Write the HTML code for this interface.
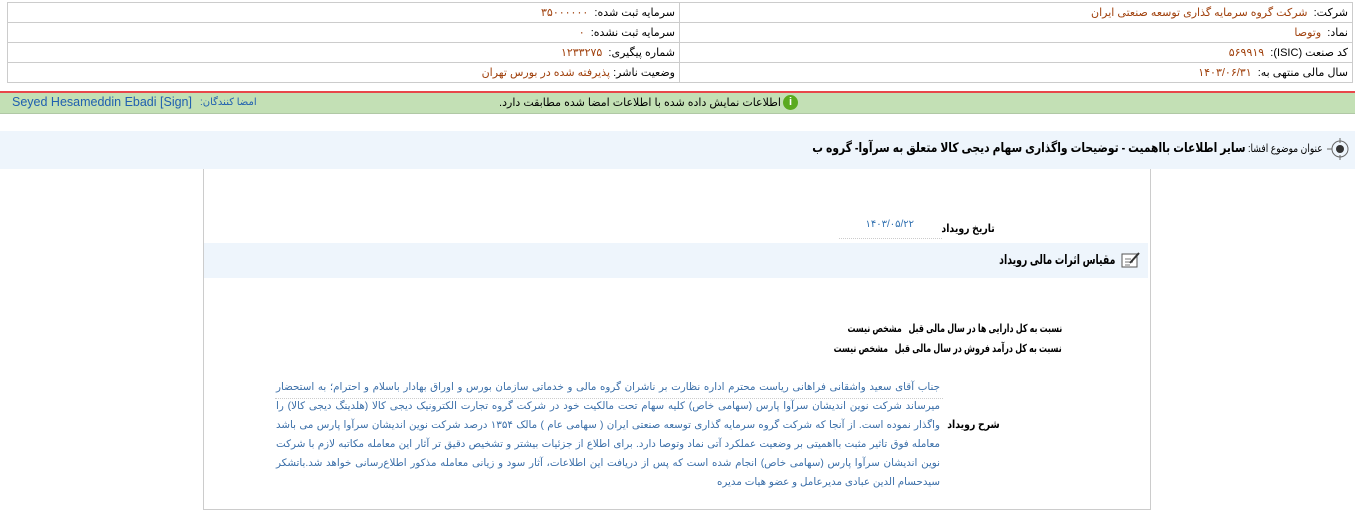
<!DOCTYPE html>
<html><head><meta charset="utf-8"><style>
body{margin:0;width:1355px;height:529px;background:#fff;position:relative;overflow:hidden;font-family:"Liberation Sans","DejaVu Sans",sans-serif;font-size:11px;color:#000}
.a{position:absolute;white-space:nowrap;direction:rtl}
.v{color:#a0410d}
table.t{position:absolute;left:7px;top:2px;width:1346px;border-collapse:collapse}
table.t td{border:1px solid #ccc;height:19px;padding:0 4px;direction:rtl;text-align:right;font-size:11px}
</style></head><body>
<table class="t">
<tr><td style="width:663px">سرمایه ثبت شده: &nbsp;<span class="v">۳۵۰۰۰۰۰۰</span></td><td>شرکت: &nbsp;<span class="v">شرکت گروه سرمایه گذاری توسعه صنعتی ایران</span></td></tr>
<tr><td>سرمایه ثبت نشده: &nbsp;<span class="v">۰</span></td><td>نماد: &nbsp;<span class="v">وتوصا</span></td></tr>
<tr><td>شماره پیگیری: &nbsp;<span class="v">۱۲۳۳۲۷۵</span></td><td>کد صنعت (ISIC): &nbsp;<span class="v">۵۶۹۹۱۹</span></td></tr>
<tr><td>وضعیت ناشر: <span class="v">پذیرفته شده در بورس تهران</span></td><td>سال مالی منتهی به: &nbsp;<span class="v">۱۴۰۳/۰۶/۳۱</span></td></tr>
</table>
<div style="position:absolute;left:0;top:91px;width:1355px;height:2px;background:#e8474a"></div>
<div style="position:absolute;left:0;top:93px;width:1355px;height:20px;background:#c3e0b5;border-bottom:1px solid #b0c8a5"></div>
<div class="a" style="right:574px;top:96px;font-size:11px">اطلاعات نمایش داده شده با اطلاعات امضا شده مطابقت دارد.</div>
<div style="position:absolute;left:783px;top:95px;width:15px;height:15px;border-radius:50%;background:#5aaa1e;color:#fff;font-size:11px;font-weight:bold;text-align:center;line-height:15px">i</div>
<div class="a" style="left:12px;top:95px;direction:ltr;font-size:12.5px;color:#2060b0">Seyed Hesameddin Ebadi [Sign]</div>
<div class="a" style="left:200px;top:97px;font-size:10px;color:#2060b0">امضا کنندگان:</div>
<div style="position:absolute;left:0;top:131px;width:1355px;height:38px;background:#eef5fc"></div>
<svg style="position:absolute;left:1327px;top:137px" width="26" height="24"><circle cx="13" cy="12" r="8" fill="none" stroke="#666" stroke-width="1"/><circle cx="13" cy="12" r="4" fill="#333"/><path d="M13 1v5M13 18v5M0 12h5" stroke="#666"/></svg>
<div class="a" style="right:32px;top:140px;font-size:13px;font-weight:bold;transform:scaleX(0.825);transform-origin:right"><span style="font-size:11px;font-weight:normal">عنوان موضوع افشا: </span>سایر اطلاعات بااهمیت - توضیحات واگذاری سهام دیجی کالا متعلق به سرآوا- گروه ب</div>
<div style="position:absolute;left:203px;top:169px;width:946px;height:340px;border:1px solid #ccc;border-top:none"></div>
<div class="a" style="right:360px;top:222px;font-weight:bold;transform:scaleX(0.85);transform-origin:right">تاریخ رویداد</div>
<div class="a" style="right:441px;top:219px;color:#3070b0;font-size:10px">۱۴۰۳/۰۵/۲۲</div>
<div style="position:absolute;left:839px;top:238px;width:103px;border-top:1px dotted #ccc"></div>
<div style="position:absolute;left:204px;top:243px;width:944px;height:35px;background:#eef5fc"></div>
<svg style="position:absolute;left:1121px;top:251px" width="20" height="18"><rect x="1" y="3" width="15" height="13" fill="#fff" stroke="#555"/><path d="M4 8h6M4 11h8M4 14h5" stroke="#777"/><path d="M9 12l9-10" stroke="#333" stroke-width="2"/></svg>
<div class="a" style="right:240px;top:252px;font-size:13px;font-weight:bold;transform:scaleX(0.72);transform-origin:right">مقیاس اثرات مالی رویداد</div>
<div class="a" style="right:293px;top:322px;font-weight:bold;transform:scaleX(0.72);transform-origin:right">نسبت به کل دارایی ها در سال مالی قبل&nbsp;&nbsp; مشخص نیست</div>
<div class="a" style="right:293px;top:342px;font-weight:bold;transform:scaleX(0.72);transform-origin:right">نسبت به کل درآمد فروش در سال مالی قبل&nbsp;&nbsp; مشخص نیست</div>
<div class="a" style="right:355px;top:418px;font-weight:bold;transform:scaleX(0.85);transform-origin:right">شرح رویداد</div>
<div style="position:absolute;left:276px;top:378px;width:664px;direction:rtl;text-align:justify;color:#3a6ea8;font-size:10.3px;line-height:19px">جناب آقای سعید واشقانی فراهانی ریاست محترم اداره نظارت بر ناشران گروه مالی و خدماتی سازمان بورس و اوراق بهادار باسلام و احترام؛ به استحضار میرساند شرکت نوین اندیشان سرآوا پارس (سهامی خاص) کلیه سهام تحت مالکیت خود در شرکت گروه تجارت الکترونیک دیجی کالا (هلدینگ دیجی کالا) را واگذار نموده است. از آنجا که شرکت گروه سرمایه گذاری توسعه صنعتی ایران ( سهامی عام ) مالک ۱۳۵۴ درصد شرکت نوین اندیشان سرآوا پارس می باشد معامله فوق تاثیر مثبت بااهمیتی بر وضعیت عملکرد آتی نماد وتوصا دارد. برای اطلاع از جزئیات بیشتر و تشخیص دقیق تر آثار این معامله مکاتبه لازم با شرکت نوین اندیشان سرآوا پارس (سهامی خاص) انجام شده است که پس از دریافت این اطلاعات، آثار سود و زیانی معامله مذکور اطلاع‌رسانی خواهد شد.باتشکر سیدحسام الدین عبادی مدیرعامل و عضو هیات مدیره</div>
<div style="position:absolute;left:275px;top:398px;width:668px;border-top:1px dotted #ccc"></div>
</body></html>
